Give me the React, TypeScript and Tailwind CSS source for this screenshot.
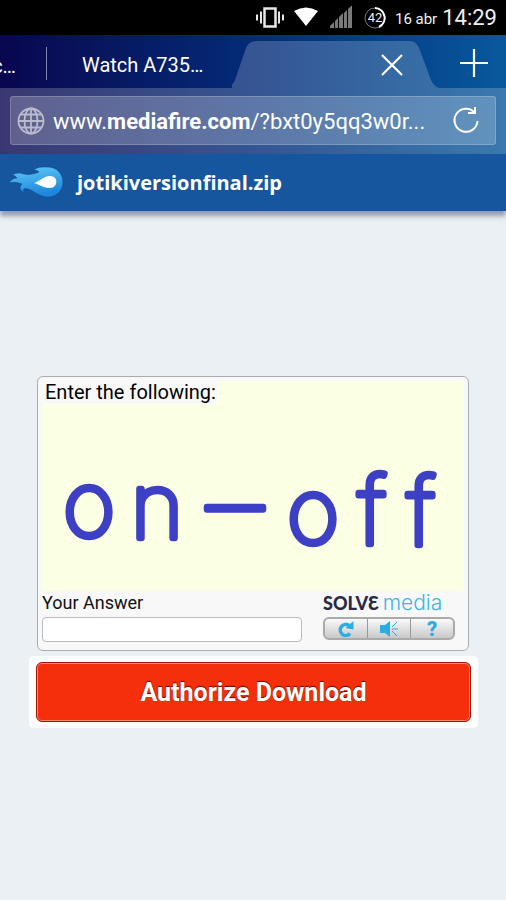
import { useState } from "react";

// centre x and baseline of every sign in the captcha picture
const captchaSigns = [
    { char: "o", x: 47, y: 155, size: 90 },
    { char: "n", x: 115, y: 157, size: 90 },
    { char: "–", x: 193, y: 162, size: 112 },
    { char: "o", x: 271, y: 162, size: 90 },
    { char: "f", x: 330, y: 163, size: 94 },
    { char: "f", x: 379, y: 164, size: 94 },
];

function StatusBar() {
    return (
        <div className="flex h-[35px] items-center justify-end bg-black pr-[9px] text-[#f0f0f0]">
            {/* Vibrate */}
            <svg width="28" height="24" viewBox="0 0 28 24" fill="none" stroke="#e8e8e8" strokeWidth="2" aria-hidden="true">
                <rect x="8.500" y="2.500" width="11" height="18" strokeWidth="2.500" />
                <path d="M5 5.500v12M1 8.500v6M23 5.500v12M27 8.500v6" />
            </svg>
            {/* Wifi */}
            <svg className="ml-[9px]" width="26" height="24" viewBox="0 0 26 24" aria-hidden="true">
                <path d="M1 5Q13-2 25 5L13 20Z" fill="#fff" />
            </svg>
            {/* Signal */}
            <svg className="ml-[10px]" width="24" height="24" viewBox="0 0 24 24" fill="#7a7a7a" aria-hidden="true">
                <path d="M1 22v-2l4-4v6zM6 22v-7l3-3v10zM10 22V11l4-4v15zM15 22V7l3-3v18zM19 22V3l4-4v23z" />
            </svg>
            {/* Battery */}
            <div className="relative ml-[11px] flex size-[22px] items-center justify-center text-[13px]">
                <svg className="absolute inset-0" width="22" height="22" viewBox="0 0 22 22" fill="none" aria-hidden="true">
                    <circle cx="11" cy="11" r="10" stroke="#777" />
                    <path d="M11 1a10 10 0 0 1 4 19" stroke="#fff" strokeWidth="2" />
                </svg>
                <span>42</span>
            </div>
            <span className="mt-1 ml-[9px] text-[15px]">16 abr</span>
            <span className="ml-[5px] text-[22px]">14:29</span>
        </div>
    );
}

function TabStrip() {
    return (
        <div className="flex h-[53px] items-stretch text-[20px] text-white">
            <div className="flex w-[46px] items-center justify-end overflow-hidden pr-[30px] whitespace-nowrap">
                <span className="pt-2">c…</span>
            </div>
            <div className="mt-3 h-[33px] w-px bg-white/50" />
            <button type="button" className="w-[185px] pt-[6px] pr-1 pl-[35px] text-left">
                Watch A735…
            </button>
            <div className="relative flex flex-1 items-center justify-end">
                {/* Slanted tab background */}
                <svg
                    className="absolute inset-x-0 bottom-0 h-[47px] w-full"
                    viewBox="0 0 208 47"
                    preserveAspectRatio="none"
                    aria-hidden="true"
                >
                    <path d="M-6 47Q0 46 3 39L14 7Q17 0 24 0H178Q184 0 187 7L199 39Q202 46 208 47Z" fill="#fff" fillOpacity=".2" />
                </svg>
                <button type="button" aria-label="Close tab" className="relative mr-[37px] pt-[6px]">
                    <svg width="22" height="22" viewBox="0 0 22 22" stroke="#fff" strokeWidth="2.200" aria-hidden="true">
                        <path d="M1 1l20 20M21 1L1 21" />
                    </svg>
                </button>
            </div>
            <button type="button" aria-label="New tab" className="w-[66px] pt-[2px] pl-5">
                <svg width="28" height="28" viewBox="0 0 28 28" stroke="#fff" strokeWidth="2.200" aria-hidden="true">
                    <path d="M14 0v28M0 14h28" />
                </svg>
            </button>
        </div>
    );
}

function AddressBar() {
    const [url, setUrl] = useState("");

    return (
        <div className="bg-white/20 px-[10px] pt-2 pb-[9px]">
            <div className="flex h-[49px] items-center rounded-[3px] border border-white/20 bg-white/20 pr-[15px] pl-[6px] text-white">
                <svg width="28" height="28" viewBox="0 0 28 28" fill="none" stroke="#b9bccb" strokeWidth="1.800" aria-hidden="true">
                    <circle cx="14" cy="14" r="12.500" />
                    <ellipse cx="14" cy="14" rx="6.500" ry="12.500" />
                    <path d="M14 1.500v25M1.500 14h25M4 7.500h20M4 20.500h20" />
                </svg>
                <label className="relative ml-[8px] min-w-0 flex-1 pt-[2px] text-[22px] whitespace-nowrap">
                    {!url && (
                        <span>
                            www.<b>mediafire.com</b>/?bxt0y5qq3w0r...
                        </span>
                    )}
                    <input
                        type="text"
                        aria-label="Address"
                        value={url}
                        onChange={(e) => setUrl(e.target.value)}
                        className="absolute inset-0 w-full bg-transparent outline-none"
                    />
                </label>
                <button type="button" aria-label="Reload">
                    <svg width="28" height="28" viewBox="0 0 28 28" fill="none" stroke="#fff" strokeWidth="2" aria-hidden="true">
                        <path d="M22.500 5.500A11.500 11.500 0 1 0 25.500 14" />
                        <path d="M23 0v6h-7" />
                    </svg>
                </button>
            </div>
        </div>
    );
}

function FileHeader() {
    return (
        <header className="flex h-[57px] items-center bg-[#15569f] pl-2 shadow-[0_5px_5px_rgba(90,100,105,0.6)]">
            <svg width="56" height="34" viewBox="0 0 56 34" aria-hidden="true">
                <defs>
                    <linearGradient id="flame" x1="0" y1="0" x2="0.300" y2="1">
                        <stop offset="0" stopColor="#62cdf8" />
                        <stop offset="1" stopColor="#1d86dc" />
                    </linearGradient>
                </defs>
                <path
                    d="M0 17C4 14 5 12 9 12Q7 9 4 9C9 6 13 7 16 8C21 9 26 8 31 6Q28 3 25 5C29 0 35 1 40 1C49 1 55 8 55 16C55 26 47 32 38 31C30 30 26 25 20 23C16 22 14 23 17 27C11 25 11 20 14 18Q7 15 0 17Z"
                    fill="url(#flame)"
                    stroke="#0e4789"
                    strokeWidth=".6"
                />
                <path d="M26 17C32 15 36 10 42 10C51 10 50 22 42 22C35 22 33 19 26 17Z" fill="#fff" />
            </svg>
            <h1 className="ml-[13px] font-['Open_Sans',sans-serif] text-[20px] font-bold text-white">jotikiversionfinal.zip</h1>
        </header>
    );
}

function Captcha() {
    return (
        <div className="rounded-md border border-[#a9adb0] bg-[#f8f8f9] px-1 pt-1 pb-2">
            <div className="relative">
                <svg className="block w-full bg-[#fbffe3]" viewBox="0 0 422 210" role="img" aria-label="Captcha">
                    <g
                        fill="#3d3fc4"
                        stroke="#3d3fc4"
                        strokeWidth="6.500"
                        strokeLinejoin="round"
                        textAnchor="middle"
                        fontFamily="Inter, sans-serif"
                        fontWeight="100"
                    >
                        {captchaSigns.map((sign) => (
                            <text key={sign.x} x={sign.x} y={sign.y} fontSize={sign.size}>
                                {sign.char}
                            </text>
                        ))}
                    </g>
                </svg>
                <p className="absolute top-0 left-0 bg-[#f8f8f9] pr-px pl-[3px] text-[20px] leading-[23px] text-black">Enter the following:</p>
            </div>
            <div className="flex justify-between pr-[9px]">
                <div className="w-[260px]">
                    <label htmlFor="answer" className="block text-[18px] leading-6 text-[#111]">
                        Your Answer
                    </label>
                    <input id="answer" type="text" className="mt-[2px] block h-[25px] w-full rounded-[4px] border border-[#bbb] bg-white px-2" />
                </div>
                <div>
                    <p className="flex h-6 items-center gap-1 whitespace-nowrap">
                        <span className="font-['Lato',sans-serif] text-[18px] font-black text-[#2b2a42]">SOLVƐ</span>
                        <span className="font-['Inter',sans-serif] text-[21px] leading-6 font-light text-[#3db4e5]">media</span>
                    </p>
                    <div className="mt-[2px] flex h-[23px] w-[132px] divide-x divide-[#999] rounded-md border-2 border-[#aaa] bg-linear-to-b from-[#fafafa] to-[#c9c9c9]">
                        <button type="button" aria-label="New challenge" className="flex flex-1 items-center justify-center">
                            <svg width="18" height="16" viewBox="0 0 18 16" aria-hidden="true">
                                <path d="M13 12.500A5.500 5.500 0 1 1 12 4.500" fill="none" stroke="#2aade3" strokeWidth="3.500" />
                                <path d="M16.500 0V8.500L8.500 7Z" fill="#2aade3" />
                            </svg>
                        </button>
                        <button type="button" aria-label="Audio challenge" className="flex flex-1 items-center justify-center">
                            <svg width="18" height="16" viewBox="0 0 18 16" aria-hidden="true">
                                <path d="M0 4h5l5-4v16l-5-4H0z" fill="#2aade3" />
                                <path d="M12 6l5-5M12 8h6M12 10l5 5" stroke="#2aade3" fill="none" />
                            </svg>
                        </button>
                        <button type="button" aria-label="Help" className="flex-1 text-[20px] leading-5 font-black text-[#2aade3]">
                            ?
                        </button>
                    </div>
                </div>
            </div>
        </div>
    );
}

export default function App() {
    return (
        <div className="min-h-screen bg-[#ebf0f4] font-['Roboto',sans-serif]">
            <StatusBar />
            <div className="bg-linear-to-r from-[#08064f] via-[#032b78] to-[#0a589c]">
                <TabStrip />
                <AddressBar />
            </div>
            <FileHeader />
            <main className="mt-[165px] pr-7 pl-[29px]">
                <div className="pr-[9px] pl-2">
                    <Captcha />
                </div>
                <div className="mt-[5px] rounded-[5px] bg-white px-[7px] py-[6px]">
                    <button
                        type="button"
                        className="h-[60px] w-full rounded-md border border-[#a8150a] bg-[#f52e0b] pt-[2px] text-[25px] font-bold text-white shadow-[inset_0_0_0_1px_#ff8a72] text-shadow-[0_-1px_1px_#5a0d00]"
                    >
                        Authorize Download
                    </button>
                </div>
            </main>
        </div>
    );
}
